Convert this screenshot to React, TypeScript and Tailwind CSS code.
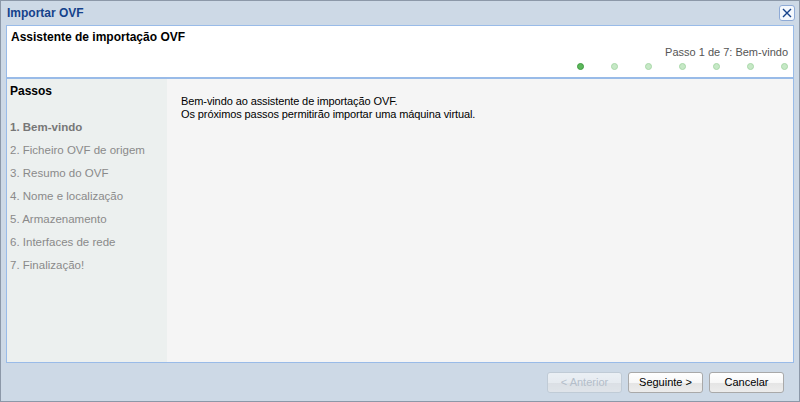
import clsx from "clsx";

const steps = [
    "1. Bem-vindo",
    "2. Ficheiro OVF de origem",
    "3. Resumo do OVF",
    "4. Nome e localização",
    "5. Armazenamento",
    "6. Interfaces de rede",
    "7. Finalização!",
];

function WizardButton({ label, disabled }: { label: string; disabled?: boolean }) {
    return (
        <button
            disabled={disabled}
            className={clsx(
                "w-[75px] h-[21px] rounded-[3px] border text-[11px] leading-none",
                "bg-[linear-gradient(#ffffff_0%,#f7f7f7_50%,#e4e4e4_51%,#ececec_100%)]",
                disabled
                    ? "border-[#b9c3cd] text-[#a3acb6] opacity-60"
                    : "border-[#a9a9a9] text-[#000]"
            )}
        >
            {label}
        </button>
    );
}

export default function App() {
    return (
        <div
            className="w-[800px] h-[402px] bg-[#cdd9e6] border border-[#8c98a8] flex flex-col"
            style={{ fontFamily: '"Liberation Sans", Arial, sans-serif' }}
        >
            {/* Title bar */}
            <div className="h-[24px] flex items-center justify-between pl-[6px] pr-[4px]">
                <span className="text-[12px] font-bold text-[#15428b]">Importar OVF</span>
                <div className="w-[16px] h-[16px] rounded-[3px] border border-[#8eaad6] bg-[#f4f8fd] flex items-center justify-center">
                    <svg width="10" height="10" viewBox="0 0 10 10">
                        <path d="M1 1L9 9M9 1L1 9" stroke="#15428b" strokeWidth="1.4" />
                    </svg>
                </div>
            </div>

            {/* Body panel */}
            <div className="mx-[5px] h-[338px] border border-[#99bbe8] flex flex-col">
                {/* Header */}
                <div className="h-[53px] bg-white border-b-2 border-[#99bbe8] flex flex-col pt-[4px] pl-[4px] pr-[5px]">
                    <span className="text-[12px] font-bold text-black leading-[15px]">
                        Assistente de importação OVF
                    </span>
                    <span className="self-end text-[11px] text-[#555] leading-[13px] mt-[1px]">
                        Passo 1 de 7: Bem-vindo
                    </span>
                    <div className="self-end flex gap-[27px] mt-[4px]">
                        {steps.map((s, i) => (
                            <span
                                key={s}
                                className={clsx(
                                    "w-[7px] h-[7px] rounded-full border",
                                    i === 0
                                        ? "bg-[#5cb85c] border-[#3f9a3f]"
                                        : "bg-[#c6e8c6] border-[#a8d8a8]"
                                )}
                            />
                        ))}
                    </div>
                </div>

                {/* Content */}
                <div className="flex-1 flex">
                    <div className="w-[160px] bg-[#ecf0ef] pl-[3px] pt-[5px]">
                        <div className="text-[12px] font-bold text-black leading-[15px] mb-[17px]">Passos</div>
                        <div className="flex flex-col">
                            {steps.map((s, i) => (
                                <div
                                    key={s}
                                    className={clsx(
                                        "h-[23px] flex items-center text-[11.5px]",
                                        i === 0 ? "font-bold text-[#777]" : "text-[#8a8a8a]"
                                    )}
                                >
                                    {s}
                                </div>
                            ))}
                        </div>
                    </div>
                    <div className="flex-1 bg-[#f5f5f5] pl-[14px] pt-[16px] text-[11px] leading-[13px] text-black tracking-[-0.1px]">
                        <p>Bem-vindo ao assistente de importação OVF.</p>
                        <p>Os próximos passos permitirão importar uma máquina virtual.</p>
                    </div>
                </div>
            </div>

            {/* Footer */}
            <div className="flex-1 flex items-center justify-end gap-[6px] pr-[15px]">
                <WizardButton label="< Anterior" disabled />
                <WizardButton label="Seguinte >" />
                <WizardButton label="Cancelar" />
            </div>
        </div>
    );
}
